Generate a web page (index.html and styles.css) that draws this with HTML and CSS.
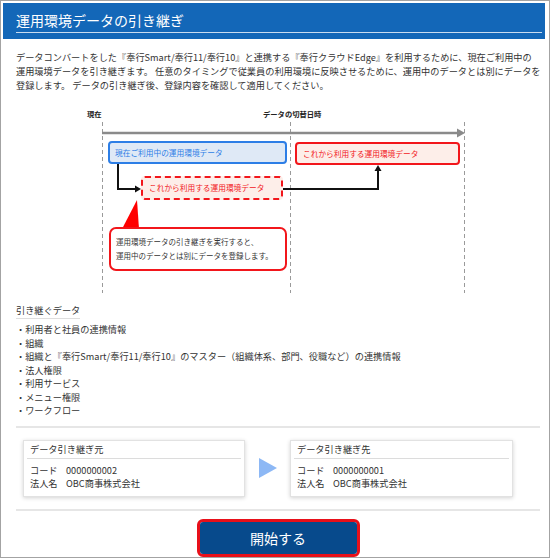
FILE: index.html
```html
<!DOCTYPE html>
<html lang="ja">
<head>
<meta charset="utf-8">
<title>運用環境データの引き継ぎ</title>
<link rel="stylesheet" href="styles.css">
</head>
<body>
<div class="frame">
  <header class="hdr"><h1>運用環境データの引き継ぎ</h1></header>
  <div class="content">
    <p class="intro">データコンバートをした『奉行Smart/奉行11/奉行10』と連携する『奉行クラウドEdge』を利用するために、現在ご利用中の<br>運用環境データを引き継ぎます。 任意のタイミングで従業員の利用環境に反映させるために、運用中のデータとは別にデータを<br>登録します。 データの引き継ぎ後、登録内容を確認して適用してください。</p>

    <div class="diagram">
      <svg class="lines" width="524" height="190" viewBox="0 0 524 190">
        <g stroke="#9a9a9a" stroke-width="1" stroke-dasharray="4 3">
          <line x1="86.5" y1="17" x2="86.5" y2="188"/>
          <line x1="274.5" y1="17" x2="274.5" y2="188"/>
          <line x1="448.5" y1="17" x2="448.5" y2="188"/>
        </g>
        <line x1="86" y1="28" x2="442" y2="28" stroke="#8a8a8a" stroke-width="2.5"/>
        <polygon points="441,23.5 449,28 441,32.5" fill="#8a8a8a"/>
        <polyline points="102,59 102,84 120,84" fill="none" stroke="#111" stroke-width="2"/>
        <polygon points="119,80.5 125,84 119,87.5" fill="#111"/>
        <polyline points="267,84 362,84 362,66" fill="none" stroke="#111" stroke-width="2"/>
        <polygon points="358.5,66 362,60 365.5,66" fill="#111"/>
        <polygon points="121,95 106,124 123,124" fill="#f00"/>
      </svg>
      <div class="lbl lbl-now">現在</div>
      <div class="lbl lbl-switch">データの切替日時</div>
      <div class="box box-current">現在ご利用中の運用環境データ</div>
      <div class="box box-next">これから利用する運用環境データ</div>
      <div class="box box-new">これから利用する運用環境データ</div>
      <div class="callout">運用環境データの引き継ぎを実行すると、<br>運用中のデータとは別にデータを登録します。</div>
    </div>

    <div class="sec-title">引き継ぐデータ</div>
    <ul class="items">
      <li>・利用者と社員の連携情報</li>
      <li>・組織</li>
      <li>・組織と『奉行Smart/奉行11/奉行10』のマスター（組織体系、部門、役職など）の連携情報</li>
      <li>・法人権限</li>
      <li>・利用サービス</li>
      <li>・メニュー権限</li>
      <li>・ワークフロー</li>
    </ul>

    <div class="sep"></div>

    <div class="transfer">
      <div class="card">
        <div class="card-title">データ引き継ぎ元</div>
        <div class="card-body">
          <div class="row"><span class="k">コード</span><span>0000000002</span></div>
          <div class="row"><span class="k">法人名</span><span>OBC商事株式会社</span></div>
        </div>
      </div>
      <div class="tri"></div>
      <div class="card">
        <div class="card-title">データ引き継ぎ先</div>
        <div class="card-body">
          <div class="row"><span class="k">コード</span><span>0000000001</span></div>
          <div class="row"><span class="k">法人名</span><span>OBC商事株式会社</span></div>
        </div>
      </div>
    </div>

    <div class="sep sep2"></div>

    <div class="actions">
      <div class="start-wrap"><button class="start" type="button">開始する</button></div>
    </div>
  </div>
</div>
</body>
</html>
```
FILE: styles.css
```css
html, body {
  margin: 0;
  padding: 0;
  background: #fff;
}
body {
  font-family: "Noto Sans CJK JP", "Noto Sans", "Liberation Sans", sans-serif;
  color: #333;
}
.frame {
  width: 550px;
  height: 558px;
  box-sizing: border-box;
  border: 1px solid #a3a3a3;
  overflow: hidden;
}
.hdr {
  margin: 2px 4px 0 2px;
  height: 36px;
  background: #1367b8;
}
.hdr h1 {
  margin: 0 3px 0 13px;
  padding: 7px 0 2px;
  font-size: 14px;
  line-height: 20px;
  font-weight: normal;
  color: #fff;
  border-bottom: 1px solid #c9dcf0;
}
.content {
  padding: 0 9px 0 15px;
}
.intro {
  margin: 11px 0 0;
  font-size: 9.2px;
  line-height: 14px;
  white-space: nowrap;
}
.diagram {
  position: relative;
  height: 190px;
  margin-top: 13px;
}
.lines {
  position: absolute;
  left: 0;
  top: 0;
}
.lbl {
  position: absolute;
  top: 4px;
  font-size: 7.3px;
  line-height: 10px;
  font-weight: bold;
  color: #222;
}
.lbl-now { left: 71px; }
.lbl-switch { left: 247px; }
.box {
  position: absolute;
  box-sizing: border-box;
  height: 23px;
  border: 2px solid;
  border-radius: 4px;
  font-size: 7.7px;
  line-height: 19px;
  padding-left: 5px;
}
.box-current {
  left: 92px;
  top: 36px;
  width: 179px;
  border-color: #2d7ee6;
  background: #dfe9f6;
  color: #2d7ee6;
}
.box-next {
  left: 279px;
  top: 37px;
  width: 165px;
  border-color: #f2161b;
  background: #fdeee9;
  color: #f2161b;
  padding-left: 6px;
}
.box-new {
  left: 125px;
  top: 71px;
  width: 142px;
  height: 24px;
  border-style: dashed;
  border-color: #f2161b;
  background: #fdeee9;
  color: #f2161b;
  line-height: 20px;
  padding-left: 6px;
}
.callout {
  position: absolute;
  left: 93px;
  top: 122px;
  width: 178px;
  height: 44px;
  box-sizing: border-box;
  border: 2px solid #f2161b;
  border-radius: 7px;
  background: #fff;
  font-size: 7.5px;
  line-height: 14px;
  padding: 6px 0 0 5px;
  color: #333;
}
.sec-title {
  width: fit-content;
  margin-top: 9px;
  font-size: 9.2px;
  line-height: 12px;
  padding-bottom: 2px;
  border-bottom: 1px solid #dedede;
}
.items {
  list-style: none;
  margin: 4px 0 0;
  padding: 0;
  font-size: 9.2px;
  line-height: 13.5px;
}
.sep {
  height: 2px;
  background: #e6e6e6;
  margin-top: 8px;
}
.transfer {
  display: flex;
  align-items: center;
  margin-top: 12px;
  padding-left: 7px;
}
.card {
  width: 222px;
  height: 57px;
  box-sizing: border-box;
  border: 1px solid #e2e2e2;
  box-shadow: 0 1px 4px rgba(0, 0, 0, 0.18);
  background: #fff;
  padding: 0 3px;
  font-size: 9.2px;
}
.card + .tri + .card {
  width: 223px;
}
.card-title {
  line-height: 17px;
  padding-left: 3px;
  border-bottom: 1px solid #dcdcdc;
}
.card-body {
  padding: 5px 0 0 3px;
}
.row {
  display: flex;
  line-height: 13px;
}
.row .k {
  width: 36px;
}
.tri {
  width: 0;
  height: 0;
  margin: 0 13px 0 14px;
  border-left: 18px solid #8db8f5;
  border-top: 10px solid transparent;
  border-bottom: 10px solid transparent;
}
.sep2 {
  margin-top: 12px;
}
.actions {
  display: flex;
  justify-content: center;
  margin-top: 8px;
}
.start-wrap {
  border: 3px solid #e8101a;
  border-radius: 6px;
  display: flex;
}
.start {
  width: 157px;
  height: 32px;
  border: none;
  border-radius: 3px;
  background: #074a8c;
  color: #fff;
  font-family: "Noto Sans CJK JP", "Noto Sans", sans-serif;
  font-size: 14px;
  padding: 0;
}
```
